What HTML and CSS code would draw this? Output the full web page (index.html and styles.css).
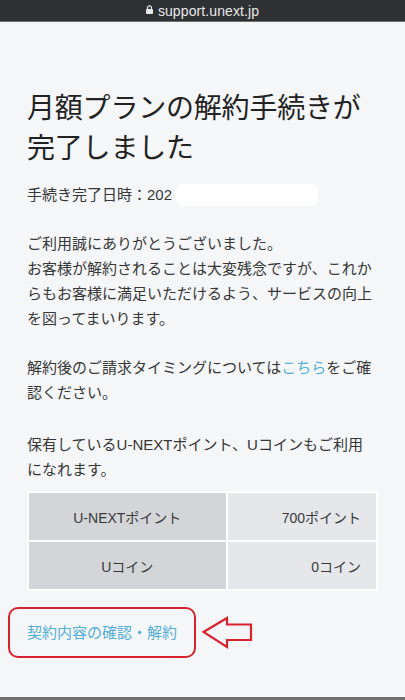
FILE: index.html
```html
<!DOCTYPE html>
<html lang="ja">
<head>
<meta charset="utf-8">
<title>解約手続き完了</title>
<link rel="stylesheet" href="styles.css">
</head>
<body>
<div class="page">
  <header class="urlbar">
    <svg class="lock" width="7" height="9" viewBox="0 0 7 9"><path d="M1.5 4V2.8a2 2 0 0 1 4 0V4" fill="none" stroke="#e8e8e8" stroke-width="1.2"/><rect x="0" y="4" width="7" height="5" rx="1" fill="#e8e8e8"/></svg>
    <span class="url">support.unext.jp</span>
  </header>
  <main class="content">
    <h1 class="title">月額プランの解約手続きが完了しました</h1>
    <p class="date">手続き完了日時：202<span class="mask"></span></p>
    <p class="text">ご利用誠にありがとうございました。<br>お客様が解約されることは大変残念ですが、これからもお客様に満足いただけるよう、サービスの向上を図ってまいります。</p>
    <p class="text">解約後のご請求タイミングについては<a class="link" href="#">こちら</a>をご確認ください。</p>
    <p class="text tight">保有しているU-NEXTポイント、Uコインもご利用になれます。</p>
    <table class="points">
      <tr><th class="label">U-NEXTポイント</th><td class="value">700ポイント</td></tr>
      <tr><th class="label">Uコイン</th><td class="value">0コイン</td></tr>
    </table>
    <div class="action">
      <a class="boxed link" href="#">契約内容の確認・解約</a>
      <svg class="arrow" width="52" height="34" viewBox="0 0 52 34"><polygon points="1.5,16 25,2 25,8.5 49,8.5 49,24 25,24 25,31 " fill="none" stroke="#d8232e" stroke-width="2.2" stroke-linejoin="miter"/></svg>
    </div>
  </main>
  <div class="bottom"></div>
</div>
</body>
</html>
```
FILE: styles.css
```css
* { box-sizing: border-box; }
html, body { margin: 0; padding: 0; }
body {
  background: #f5f6f8;
  font-family: "Liberation Sans", "Noto Sans CJK JP", sans-serif;
  color: #363636;
}
.page {
  height: 700px;
  display: flex;
  flex-direction: column;
}
.urlbar {
  height: 22px;
  background: #2f3033;
  border-bottom: 1px solid #6d6e70;
  display: flex;
  align-items: center;
  justify-content: center;
  gap: 5px;
  color: #e8e8e8;
}
.lock { margin-top: -2px; }
.url { font-size: 14px; line-height: 20px; letter-spacing: 0.1px; }
.content {
  padding: 0 30px 0 27px;
  flex: 1;
}
.title {
  margin: 67px 0 0;
  font-size: 28px;
  line-height: 40px;
  font-weight: normal;
  color: #222;
  letter-spacing: -0.2px;
}
.date {
  margin: 13px 0 0;
  font-size: 15px;
  line-height: 25px;
  display: flex;
  align-items: center;
}
.mask {
  display: inline-block;
  width: 142px;
  height: 22px;
  background: #fff;
  border-radius: 8px;
  margin-left: 4px;
}
.text {
  margin: 24px 0 0;
  font-size: 15px;
  line-height: 25px;
}
.text.tight { margin-top: 27px; }
.link { color: #52aed6; text-decoration: none; }
.points {
  margin-top: 9px;
  width: 351px;
  background: #fff;
  border-spacing: 2px;
  font-size: 14px;
  color: #3a3a3a;
}
.points th, .points td {
  height: 47px;
  padding: 0 15px;
  font-weight: normal;
}
.label {
  width: 57%;
  background: #d4d5d9;
  text-align: center;
}
.value {
  background: #e6e7ea;
  text-align: right;
}
.action {
  margin: 16px 0 0 -19px;
  display: flex;
  align-items: center;
  gap: 6px;
}
.boxed {
  display: block;
  border: 2px solid #d8232e;
  border-radius: 10px;
  padding: 0 17px;
  font-size: 15px;
  line-height: 47px;
}
.bottom {
  height: 3px;
  background: #6f6f6f;
}
```
